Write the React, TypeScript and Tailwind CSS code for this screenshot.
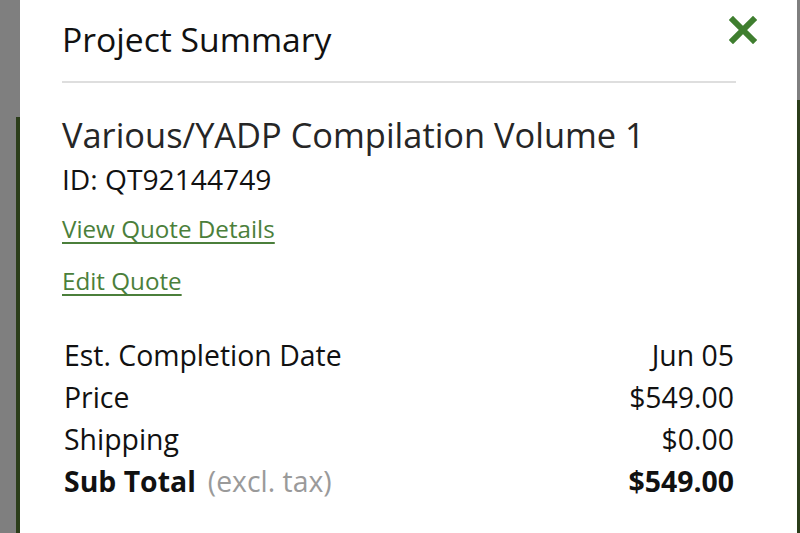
import React from 'react';

const rows = [
  { label: 'Est. Completion Date', value: 'Jun 05' },
  { label: 'Price', value: '$549.00' },
  { label: 'Shipping', value: '$0.00' },
];

function CloseIcon() {
  return (
    <svg width="28" height="28" viewBox="0 0 28 28" className="text-[#3f7e2f]">
      <path d="M4 4 L24 24 M24 4 L4 24" stroke="currentColor" strokeWidth="6" strokeLinecap="square" />
    </svg>
  );
}

export default function App() {
  return (
    <div className="w-[800px] h-[533px] flex bg-[#7f7f7f] overflow-hidden" style={{ fontFamily: '"Open Sans", "Noto Sans", sans-serif' }}>
      {/* dimmed page behind the modal */}
      <div className="w-[20px] flex">
        <div className="w-[16px]" />
        <div className="w-[4px] flex flex-col">
          <div className="h-[117px]" />
          <div className="flex-1 bg-[#2b3d1a]" />
        </div>
      </div>

      <div className="relative w-[777px] bg-white pl-[42px] pr-[61px]">
        <button className="absolute top-[16px] right-[40px]">
          <CloseIcon />
        </button>

        <h2 className="pt-[17px] pb-[20px] text-[33.7px] leading-[44px] text-[#111] border-b-2 border-[#dedede]">
          Project Summary
        </h2>

        <div className="pt-[32px]">
          <h3 className="text-[34.4px] leading-[40px] font-medium text-[#262626]">Various/YADP Compilation Volume 1</h3>
          <div className="mt-[4px] text-[28.2px] leading-[40px] text-[#111]">ID: QT92144749</div>
          <div className="mt-[13px] flex flex-col items-start gap-[18px]">
            <a href="#" className="text-[24.2px] leading-[34px] text-[#4b7f3b] underline decoration-[1.5px] underline-offset-[4px]">View Quote Details</a>
            <a href="#" className="text-[24.2px] leading-[34px] text-[#4b7f3b] underline decoration-[1.5px] underline-offset-[4px]">Edit Quote</a>
          </div>
        </div>

        <div className="mt-[36px] px-[2px] flex flex-col">
          {rows.map((r) => (
            <div key={r.label} className="flex justify-between text-[28.4px] leading-[42px] text-[#111]">
              <span>{r.label}</span>
              <span>{r.value}</span>
            </div>
          ))}
          <div className="flex justify-between text-[28.4px] leading-[42px] text-[#111]">
            <span>
              <span className="font-bold">Sub Total</span>
              <span className="ml-[12px] text-[#9a9a9a]">(excl. tax)</span>
            </span>
            <span className="font-bold">$549.00</span>
          </div>
        </div>
      </div>

      <div className="w-[3px] flex flex-col">
        <div className="h-[100px] bg-[#7f7f7f]" />
        <div className="flex-1 bg-[#2b3d1a]" />
      </div>
    </div>
  );
}
